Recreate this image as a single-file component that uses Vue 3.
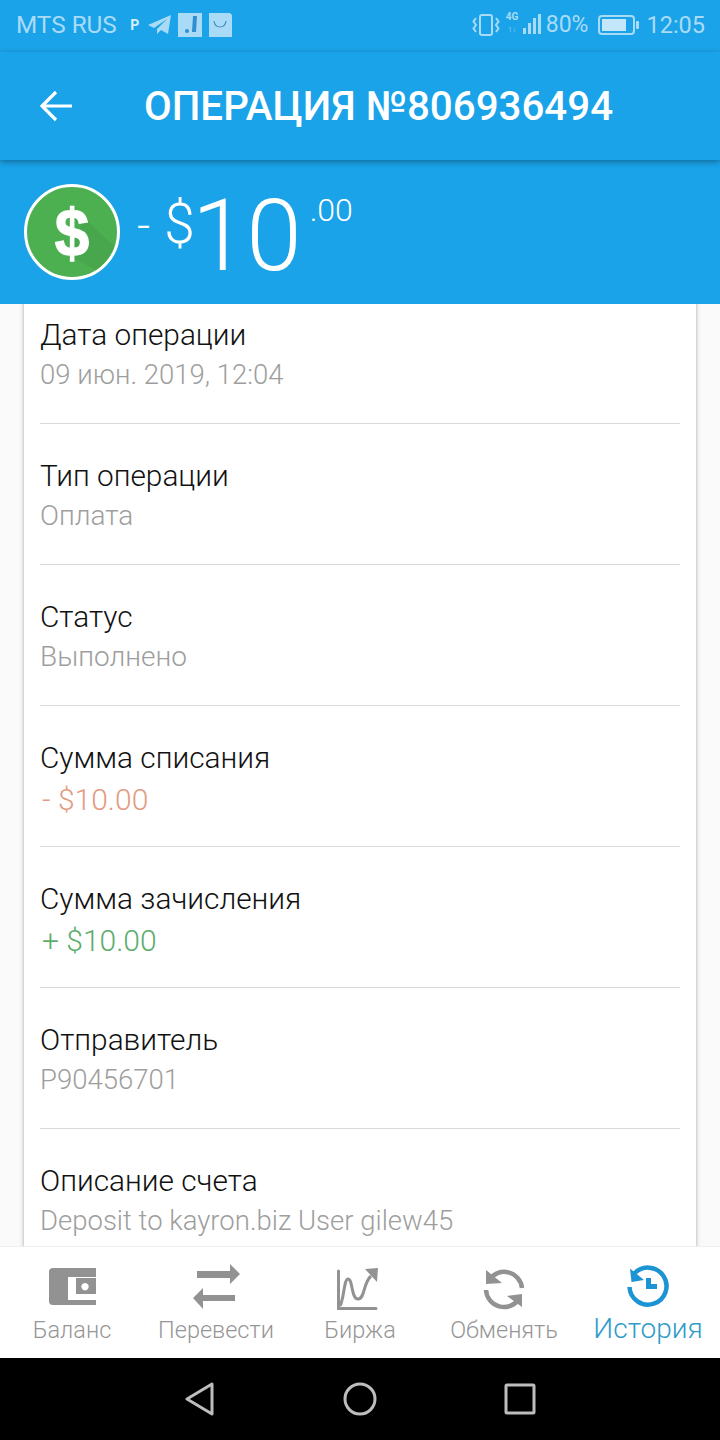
<template>
  <div class="screen">
    <!-- статус-бар -->
    <div class="status">
      <div class="status-left">
        <span class="carrier">MTS RUS</span>
        <span class="p-badge">P</span>
        <svg width="24" height="20" viewBox="0 0 24 20"><path d="M0 10 L23 0 L20 19 L13 15 L9 19 L9 14 L19 4 L6 13 Z" fill="#a9dbf7"/></svg>
        <svg width="24" height="24" viewBox="0 0 24 24"><rect width="24" height="24" fill="#a9dbf7"/><path d="M15 3h4l-1 16h-4z" fill="#2f8fd0"/><circle cx="9" cy="18" r="2" fill="#2f8fd0"/></svg>
        <svg width="24" height="24" viewBox="0 0 24 24"><path d="M1 0h21l2 2v22H1z" fill="#a9dbf7"/><path d="M6 8c1 8 11 8 12 0" fill="none" stroke="#3f8fc4" stroke-width="1.2"/></svg>
      </div>
      <div class="status-right">
        <svg width="28" height="22" viewBox="0 0 28 22" fill="none" stroke="#a9dbf7" stroke-width="2"><rect x="8" y="1" width="12" height="20" rx="2"/><path d="M4 4L1.500 7.500 4 11l-2.500 3.500L4 18M24 4l2.500 3.500L24 11l2.500 3.500L24 18"/></svg>
        <div class="net">
          <span class="net-label">4G</span>
          <span class="net-sub">1↓</span>
          <svg width="36" height="22" viewBox="0 0 36 22" fill="#a9dbf7"><rect x="17" y="14" width="3" height="6"/><rect x="22" y="9" width="3" height="11"/><rect x="27" y="4" width="3" height="16"/><rect x="32" y="0" width="3" height="20"/></svg>
        </div>
        <span class="pct">80%</span>
        <svg class="batt" width="42" height="20" viewBox="0 0 42 20"><rect x="1" y="1" width="35" height="18" rx="3" fill="none" stroke="#a9dbf7" stroke-width="2"/><rect x="4" y="4" width="24" height="12" fill="#c4e6fa"/><rect x="38" y="6" width="3" height="8" rx="1" fill="#a9dbf7"/></svg>
        <span class="clock">12:05</span>
      </div>
    </div>

    <header class="topbar">
      <svg class="back" width="34" height="32" viewBox="0 0 34 32" fill="none" stroke="#fff" stroke-width="3.2"><path d="M33 16H4M17 2L3 16l14 14"/></svg>
      <h1>ОПЕРАЦИЯ №806936494</h1>
    </header>

    <div class="amount">
      <div class="coin">
        <svg width="96" height="96" viewBox="0 0 96 96">
          <circle cx="48" cy="48" r="46.500" fill="#4caf50" stroke="#fff" stroke-width="3"/>
          <path d="M60 34 L90 62 A45 45 0 0 1 72 86 L46 72 Z" fill="#48a64c"/>
          <text transform="translate(48 71.500) scale(1 1.080)" text-anchor="middle" class="coin-sign">$</text>
        </svg>
      </div>
      <span class="minus">-</span>
      <span class="currency">$</span>
      <span class="whole">10</span>
      <span class="cents">.00</span>
    </div>

    <main class="content">
      <section class="card">
        <div v-for="row in rows" :key="row.label" class="row">
          <div class="label">{{ row.label }}</div>
          <div class="value" :class="row.type">{{ row.value }}</div>
        </div>
      </section>
    </main>

    <nav class="tabs">
      <div v-for="tab in tabs" :key="tab.name" class="tab" :class="{ active: tab.active }">
        <svg width="48" height="48" viewBox="0 0 48 48" v-html="tab.icon"></svg>
        <span>{{ tab.name }}</span>
      </div>
    </nav>

    <div class="navbar">
      <svg width="30" height="36" viewBox="0 0 30 36" fill="none" stroke="#bdbdbd" stroke-width="3" stroke-linejoin="round"><path d="M27 3L2 18l25 15z"/></svg>
      <svg width="34" height="34" viewBox="0 0 34 34" fill="none" stroke="#bdbdbd" stroke-width="3"><circle cx="17" cy="17" r="15"/></svg>
      <svg width="32" height="32" viewBox="0 0 32 32" fill="none" stroke="#bdbdbd" stroke-width="3" stroke-linejoin="round"><rect x="2" y="2" width="28" height="28" rx="1"/></svg>
    </div>
  </div>
</template>

<script setup>
const rows = [
  { label: 'Дата операции', value: '09 июн. 2019, 12:04' },
  { label: 'Тип операции', value: 'Оплата', type: 'word' },
  { label: 'Статус', value: 'Выполнено', type: 'word' },
  { label: 'Сумма списания', value: '- $10.00', type: 'minus-val' },
  { label: 'Сумма зачисления', value: '+ $10.00', type: 'plus-val' },
  { label: 'Отправитель', value: 'P90456701' },
  { label: 'Описание счета', value: 'Deposit to kayron.biz User gilew45' },
]

const gray = '#929292'
const blue = '#1c94d4'

const tabs = [
  {
    name: 'Баланс',
    icon: `<path d="M5 5h43v9H20v23h28v5H5a4 4 0 0 1-4-4V9a4 4 0 0 1 4-4z" fill="${gray}"/><path fill-rule="evenodd" d="M28 15h20v16H28zM37 20a3.700 3.700 0 1 0 .01 0z" fill="${gray}"/>`,
  },
  {
    name: 'Перевести',
    icon: `<path d="M5 8h33V1l10 10-10 10v-6H5z" fill="${gray}"/><path d="M43 32H11v-7L1 35l10 11v-8h32z" fill="${gray}"/>`,
  },
  {
    name: 'Биржа',
    icon: `<path d="M2.500 8v37.500H40" fill="none" stroke="${gray}" stroke-width="3" stroke-linecap="round"/><path d="M4 43C8 36 8 16 12 16C17 16 15 36 22 36C29 36 27 20 35 13" fill="none" stroke="${gray}" stroke-width="3"/><path d="M29 6l13-1-1 14z" fill="${gray}"/>`,
  },
  {
    name: 'Обменять',
    icon: `<path d="M9 17A18 18 0 0 1 42 25M6 27A18 18 0 0 0 39 36" fill="none" stroke="${gray}" stroke-width="4.500"/><path d="M6 7v14l16-1zM42 31v13L27 33z" fill="${gray}"/>`,
  },
  {
    name: 'История',
    active: true,
    icon: `<path d="M10 11A18.500 18.500 0 1 1 5.500 24" fill="none" stroke="${blue}" stroke-width="4.500"/><path d="M6 5.500l1.500 13.500 12.500-2z" fill="${blue}"/><path d="M22 15h5v6h6v5H22z" fill="${blue}"/>`,
  },
]
</script>

<style>
html, body { margin: 0; padding: 0; }
</style>

<style scoped>
.screen {
  width: 720px;
  height: 1440px;
  display: flex;
  flex-direction: column;
  overflow: hidden;
  background: #fafafa;
  font-family: Roboto, "Liberation Sans", sans-serif;
}

.status {
  height: 52px;
  box-sizing: border-box;
  flex: none;
  background: #1aa3e9;
  display: flex;
  justify-content: space-between;
  align-items: center;
  padding: 0 15px 3px 16px;
  color: #a9dbf7;
  font-size: 24px;
}
.status-left, .status-right { display: flex; align-items: center; }
.status-left { gap: 6px; }
.carrier { font-size: 24.300px; margin-right: 5px; }
.p-badge {
  width: 14px;
  text-align: center;
  font-size: 14px;
  font-weight: 700;
  color: #d5effc;
}
.net { position: relative; display: flex; margin-left: 6px; }
.net-label {
  position: absolute;
  left: 0;
  top: -3px;
  font-size: 10px;
  font-weight: 700;
}
.net-sub {
  position: absolute;
  left: 2px;
  top: 11px;
  font-size: 8px;
  opacity: 0.6;
}
.pct { font-size: 23px; margin-left: 4px; }
.batt { margin-left: 10px; }
.clock { font-size: 23.500px; margin-left: 6px; }

.topbar {
  height: 108px;
  box-sizing: border-box;
  flex: none;
  background: #1aa3e9;
  display: flex;
  align-items: center;
  padding: 0 0 0 39px;
  box-shadow: 0 2px 6px rgba(0, 0, 0, 0.35);
  position: relative;
  z-index: 2;
}
.back { flex: none; }
.topbar h1 {
  margin: 0 0 0 71px;
  color: #fff;
  font-size: 40.300px;
  font-weight: 500;
  white-space: nowrap;
}

.amount {
  height: 144px;
  flex: none;
  background: #1aa3e9;
  display: flex;
  align-items: flex-start;
  color: #fff;
  font-weight: 300;
  padding-left: 24px;
  position: relative;
  z-index: 1;
}
.coin {
  flex: none;
  width: 96px;
  height: 96px;
  margin-top: 24px;
}
.coin svg { display: block; }
.coin-sign {
  font-family: "Liberation Sans", sans-serif;
  font-size: 62px;
  font-weight: 700;
  fill: #fff;
  stroke: #fff;
  stroke-width: 1.2px;
}
.minus { font-size: 46px; margin: 38px 0 0 17px; line-height: 54px; }
.currency { font-size: 55px; margin: 32px 0 0 14px; line-height: 64px; letter-spacing: -3px; }
.whole { font-size: 100px; margin: 18px 0 0 0; line-height: 116px; letter-spacing: -1px; }
.cents { font-size: 32px; margin: 30px 0 0 9px; line-height: 40px; }

.content {
  flex: 1;
  min-height: 0;
  overflow: hidden;
}
/* список прокручен на 21px */
.card {
  width: 672px;
  box-sizing: border-box;
  margin: -21px 0 0 24px;
  padding: 0 16px;
  background: #fff;
  box-shadow: 0 0 4px rgba(0, 0, 0, 0.35);
}
.row {
  height: 141px;
  box-sizing: border-box;
  padding-top: 32px;
  border-bottom: 1px solid #d9d9d9;
}
.label {
  font-size: 29.800px;
  line-height: 40px;
  font-weight: 300;
  color: #111;
}
.value {
  font-size: 27.500px;
  line-height: 40px;
  font-weight: 300;
  color: #9e9e9e;
}
.word { font-size: 28px; }
.minus-val { color: #e39b82; padding-left: 2px; font-size: 30px; margin-top: 2px; }
.plus-val { color: #5cad6c; padding-left: 2px; font-size: 30px; margin-top: 2px; }

.tabs {
  height: 112px;
  flex: none;
  background: #fff;
  display: grid;
  grid-template-columns: repeat(5, 144px);
  border-top: 1px solid #eeeeee;
  box-sizing: border-box;
  position: relative;
  z-index: 1;
}
.tab {
  display: flex;
  flex-direction: column;
  align-items: center;
  padding-top: 16px;
  color: #969696;
  font-size: 23.500px;
  font-weight: 300;
  white-space: nowrap;
}
.tab svg { flex: none; }
.tab span { line-height: 32px; margin-top: 3px; }
.tab.active { color: #2f9bc9; font-size: 28px; }
.tab.active span { margin-top: 2px; }

.navbar {
  height: 82px;
  flex: none;
  background: #000;
  display: flex;
  align-items: center;
  padding: 0 184px 0 185px;
  justify-content: space-between;
}
</style>
